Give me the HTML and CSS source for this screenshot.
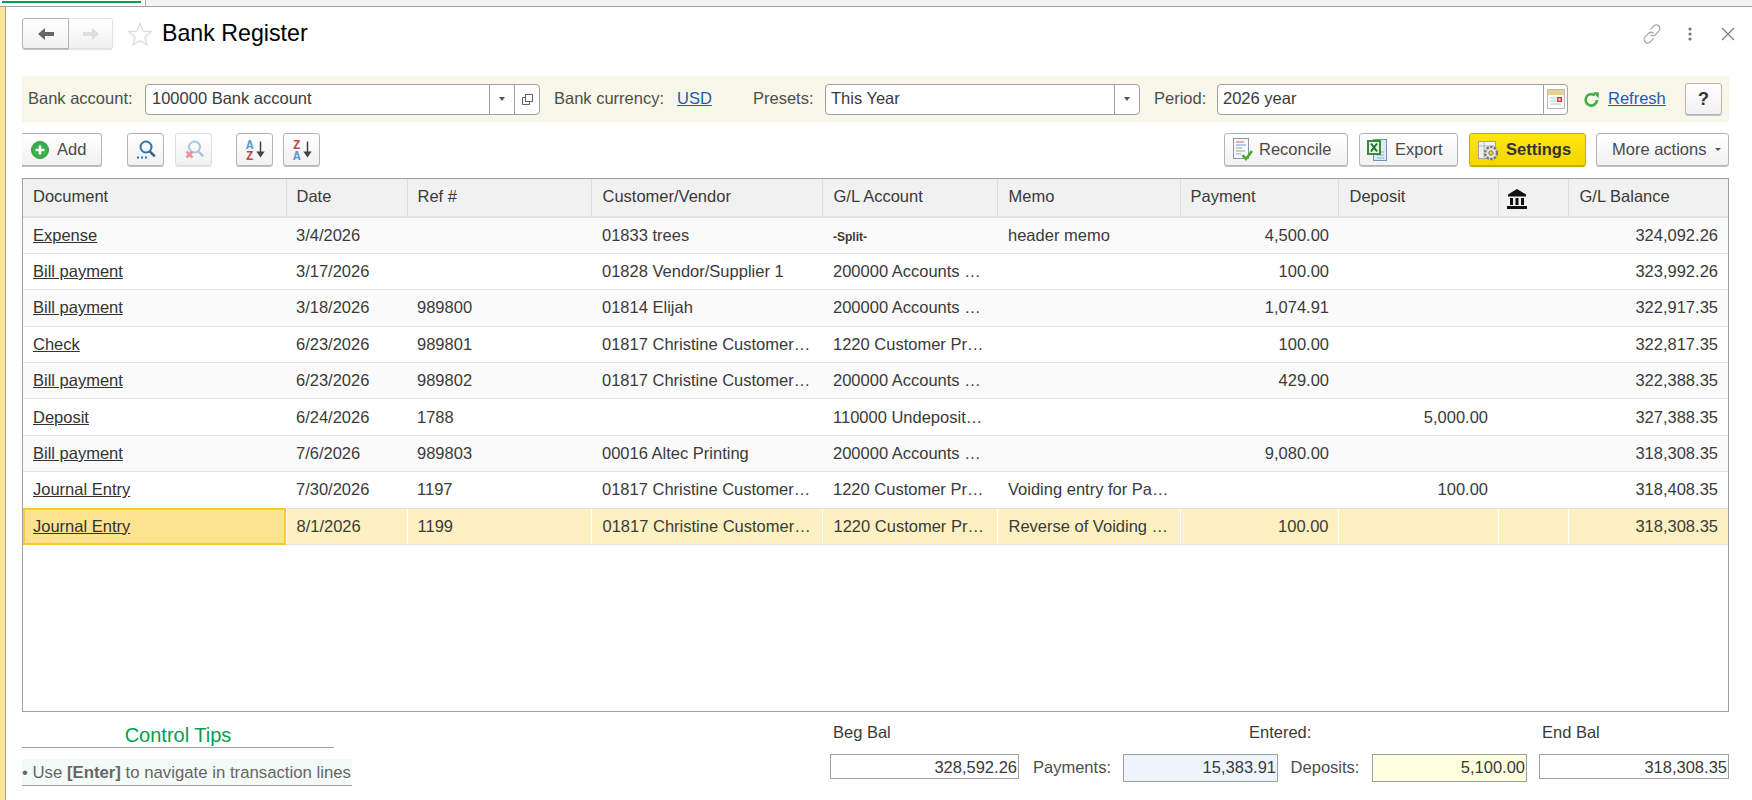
FILE: index.html
```html
<!DOCTYPE html>
<html lang="en">
<head>
    <meta charset="UTF-8">
    <title>Bank Register</title>
    <link rel="stylesheet" href="styles.css">
</head>
<body>
    <div class="tabstrip"><div class="tab"></div></div>

    <div class="main">
        <div class="edge"></div>
        <div class="window">

            <div class="titlebar">
                <div class="nav">
                    <button class="nav-btn back">
                        <svg width="18" height="14" viewBox="0 0 18 14"><path d="M8 1v4h9v4H8v4L1 7z" fill="#666"/></svg>
                    </button>
                    <button class="nav-btn forward">
                        <svg width="18" height="14" viewBox="0 0 18 14"><path d="M10 1v4H1v4h9v4l7-6z" fill="#dedede"/></svg>
                    </button>
                </div>
                <svg class="star" width="24" height="24" viewBox="0 0 24 24"><path d="M12 1.5l3 7.6 8 .6-6.1 5.2 1.9 8-6.800-4.300-6.800 4.300 1.900-8L1 9.700l8-.6z" fill="#fff" stroke="#dcdcdc" stroke-width="1.300"/></svg>
                <h1>Bank Register</h1>
                <div class="window-icons">
                    <svg width="22" height="22" viewBox="0 0 20 20" fill="none" stroke="#a8a8a8" stroke-width="1.200"><path d="M8.500 6l3-3.200a3.200 3.200 0 0 1 4.700 4.600l-3.200 3.200a3.200 3.200 0 0 1-4.400 0"/><path d="M11.500 14l-3 3.200a3.200 3.200 0 0 1-4.700-4.600L7 9.400a3.200 3.200 0 0 1 4.400 0"/></svg>
                    <svg class="kebab" width="4" height="14" viewBox="0 0 4 14"><circle cx="2" cy="2" r="1.600" fill="#777"/><circle cx="2" cy="7" r="1.600" fill="#777"/><circle cx="2" cy="12" r="1.600" fill="#777"/></svg>
                    <svg class="close" width="14" height="14" viewBox="0 0 14 14"><path d="M1 1l12 12M13 1L1 13" stroke="#808080" stroke-width="1.200"/></svg>
                </div>
            </div>

            <div class="filters">
                <span class="lbl w-account">Bank account:</span>
                <div class="field w-field1">
                    <span class="value">100000 Bank account</span>
                    <span class="field-btn drop"><i class="tri"></i></span>
                    <span class="field-btn open">
                        <svg width="13" height="13" viewBox="0 0 13 13" fill="none" stroke="#666"><rect x="4.500" y="1.500" width="7" height="7"/><path d="M4.500 4.500h-3v7h7v-3"/></svg>
                    </span>
                </div>
                <span class="lbl w-currency">Bank currency:</span>
                <a class="link w-usd" href="#">USD</a>
                <span class="lbl w-presets">Presets:</span>
                <div class="field w-field2">
                    <span class="value">This Year</span>
                    <span class="field-btn open"><i class="tri"></i></span>
                </div>
                <span class="lbl w-period">Period:</span>
                <div class="field w-field3">
                    <span class="value">2026 year</span>
                    <span class="field-btn cal">
                        <svg width="18" height="20" viewBox="0 0 18 20"><rect x=".5" y=".5" width="17" height="19" fill="#fbfbfb" stroke="#b9b9b9"/><rect x="1" y="1" width="16" height="5" fill="#e6d28e"/><path d="M3 9h6M3 12h6M3 15h11" stroke="#c4c4c4"/><rect x="10" y="8" width="5" height="5" fill="#e2343a"/><rect x="11.500" y="9.500" width="2" height="2" fill="#fff"/></svg>
                    </span>
                </div>
                <svg class="refresh" width="17" height="17" viewBox="0 0 17 17"><path d="M14 9a5.700 5.700 0 1 1-2.200-4.600" fill="none" stroke="#3fae49" stroke-width="2.600"/><path d="M10 1l6 .5-.5 6z" fill="#3fae49"/></svg>
                <a class="link w-refresh" href="#">Refresh</a>
                <button class="btn help">?</button>
            </div>

            <div class="toolbar">
                <button class="btn add">
                    <svg width="18" height="18" viewBox="0 0 18 18"><circle cx="9" cy="9" r="8.500" fill="#3cb04a" stroke="#2e9a3d"/><path d="M9 4.500v9M4.500 9h9" stroke="#fff" stroke-width="2.400"/></svg>
                    Add
                </button>
                <button class="btn square search">
                    <svg width="20" height="20" viewBox="0 0 20 20" fill="none"><circle cx="10" cy="7" r="5.500" stroke="#2f74ad" stroke-width="2"/><path d="M13.800 11.300l5 5" stroke="#2b5f8c" stroke-width="2.400"/><path d="M1 17.500h2M5 17.500h2M9 17.500h2" stroke="#2f74ad" stroke-width="2"/></svg>
                </button>
                <button class="btn square clear disabled">
                    <svg width="20" height="20" viewBox="0 0 20 20" fill="none"><circle cx="10.500" cy="7" r="5.500" stroke="#a9c6de" stroke-width="2"/><path d="M14.300 11.300l5 5" stroke="#a9c6de" stroke-width="2.400"/><path d="M2.500 11.500l6 6M8.500 11.500l-6 6" stroke="#e8929a" stroke-width="2.600"/></svg>
                </button>
                <button class="btn square sort">
                    <svg width="24" height="27" viewBox="0 0 24 27"><text x="3" y="12.500" class="az blue">A</text><text x="3" y="23.500" class="az red">Z</text><path d="M17.500 5.500v11" stroke="#444" stroke-width="1.500"/><path d="M13.300 15.500h8.400l-4.200 6z" fill="#444"/></svg>
                </button>
                <button class="btn square sort2">
                    <svg width="24" height="27" viewBox="0 0 24 27"><text x="3" y="12.500" class="az red">Z</text><text x="3" y="23.500" class="az blue">A</text><path d="M17.500 5.500v11" stroke="#444" stroke-width="1.500"/><path d="M13.300 15.500h8.400l-4.200 6z" fill="#444"/></svg>
                </button>
                <button class="btn reconcile">
                    <svg width="20" height="24" viewBox="0 0 20 24"><rect x=".5" y=".5" width="15" height="20" fill="#f5f7fa" stroke="#8c97a3"/><path d="M3 4h8" stroke="#d06a5a"/><path d="M3 7h10" stroke="#6fa3d6"/><path d="M3 10h6" stroke="#8fbf6a"/><path d="M3 13h9" stroke="#9aa3ad"/><path d="M3 16h5" stroke="#9aa3ad"/><path d="M9.500 17l3.500 4 6-8" fill="none" stroke="#4aa92f" stroke-width="2.600"/></svg>
                    Reconcile
                </button>
                <button class="btn export">
                    <svg width="21" height="24" viewBox="0 0 21 24"><rect x="6.500" y="1.500" width="13" height="21" fill="#dfe9f5" stroke="#6f8fb8"/><path d="M10 14h7M10 17h7M10 20h7" stroke="#8fb0d4"/><rect x="0" y="2" width="14" height="15" fill="#2f8f3f"/><rect x="2" y="4" width="10" height="11" fill="#e9f3e6"/><path d="M4 5.500l6 8M10 5.500l-6 8" stroke="#1f6f2e" stroke-width="2"/></svg>
                    Export
                </button>
                <button class="btn settings">
                    <svg width="21" height="22" viewBox="0 0 21 22"><rect x=".5" y="2.500" width="17" height="17" fill="#eef0f2" stroke="#a0a4a8"/><path d="M.5 7h17M6 2.500v17" stroke="#b4b8bc"/><circle cx="13" cy="14" r="6" fill="#e4e6e8" stroke="#77797c" stroke-width="2.400" stroke-dasharray="2.500 1.300"/><circle cx="13" cy="14" r="2.200" fill="#f5d800" stroke="#77797c"/></svg>
                    Settings
                </button>
                <button class="btn more">More actions <i class="tri small"></i></button>
            </div>

            <div class="grid-wrap">
                <table class="grid">
                    <colgroup>
                        <col class="c-doc"><col class="c-date"><col class="c-ref"><col class="c-cust"><col class="c-gl">
                        <col class="c-memo"><col class="c-pay"><col class="c-dep"><col class="c-bank"><col class="c-bal">
                    </colgroup>
                    <thead>
                        <tr>
                            <th>Document</th><th>Date</th><th>Ref #</th><th>Customer/Vendor</th><th>G/L Account</th>
                            <th>Memo</th><th>Payment</th><th>Deposit</th>
                            <th class="bank-col">
                                <svg width="20" height="21" viewBox="0 0 20 21"><path d="M10 1L1 6.500v2h18v-2z" fill="#111"/><path d="M3 10h3v7H3zM8.500 10h3v7h-3zM14 10h3v7h-3z" fill="#111"/><rect x="0" y="18" width="20" height="3" fill="#111"/></svg>
                            </th>
                            <th>G/L Balance</th>
                        </tr>
                    </thead>
                    <tbody>
                        <tr><td><a href="#">Expense</a></td><td>3/4/2026</td><td></td><td>01833 trees</td><td><span class="split">-Split-</span></td><td>header memo</td><td class="num">4,500.00</td><td class="num"></td><td></td><td class="num">324,092.26</td></tr>
                        <tr><td><a href="#">Bill payment</a></td><td>3/17/2026</td><td></td><td>01828 Vendor/Supplier 1</td><td>200000 Accounts …</td><td></td><td class="num">100.00</td><td class="num"></td><td></td><td class="num">323,992.26</td></tr>
                        <tr><td><a href="#">Bill payment</a></td><td>3/18/2026</td><td>989800</td><td>01814 Elijah</td><td>200000 Accounts …</td><td></td><td class="num">1,074.91</td><td class="num"></td><td></td><td class="num">322,917.35</td></tr>
                        <tr><td><a href="#">Check</a></td><td>6/23/2026</td><td>989801</td><td>01817 Christine Customer…</td><td>1220 Customer Pr…</td><td></td><td class="num">100.00</td><td class="num"></td><td></td><td class="num">322,817.35</td></tr>
                        <tr><td><a href="#">Bill payment</a></td><td>6/23/2026</td><td>989802</td><td>01817 Christine Customer…</td><td>200000 Accounts …</td><td></td><td class="num">429.00</td><td class="num"></td><td></td><td class="num">322,388.35</td></tr>
                        <tr><td><a href="#">Deposit</a></td><td>6/24/2026</td><td>1788</td><td></td><td>110000 Undeposit…</td><td></td><td class="num"></td><td class="num">5,000.00</td><td></td><td class="num">327,388.35</td></tr>
                        <tr><td><a href="#">Bill payment</a></td><td>7/6/2026</td><td>989803</td><td>00016 Altec Printing</td><td>200000 Accounts …</td><td></td><td class="num">9,080.00</td><td class="num"></td><td></td><td class="num">318,308.35</td></tr>
                        <tr><td><a href="#">Journal Entry</a></td><td>7/30/2026</td><td>1197</td><td>01817 Christine Customer…</td><td>1220 Customer Pr…</td><td>Voiding entry for Pa…</td><td class="num"></td><td class="num">100.00</td><td></td><td class="num">318,408.35</td></tr>
                        <tr class="selected"><td class="current"><a href="#">Journal Entry</a></td><td>8/1/2026</td><td>1199</td><td>01817 Christine Customer…</td><td>1220 Customer Pr…</td><td>Reverse of Voiding …</td><td class="num">100.00</td><td class="num"></td><td></td><td class="num">318,308.35</td></tr>
                    </tbody>
                </table>
            </div>

            <div class="footer">
                <div class="tips">
                    <div class="tips-title">Control Tips</div>
                    <div class="tip">• Use <b>[Enter]</b> to navigate in transaction lines</div>
                </div>
                <div class="totals">
                    <span class="total-head beg">Beg Bal</span>
                    <span class="total-head entered">Entered:</span>
                    <span class="total-head end">End Bal</span>
                    <div class="amount">328,592.26</div>
                    <span class="total-lbl pay-lbl">Payments:</span>
                    <div class="amount tall payments">15,383.91</div>
                    <span class="total-lbl">Deposits:</span>
                    <div class="amount tall deposits">5,100.00</div>
                    <div class="amount last">318,308.35</div>
                </div>
            </div>

        </div>
    </div>
</body>
</html>
```

FILE: styles.css
```css
* { box-sizing: border-box; }
html, body { margin: 0; height: 800px; overflow: hidden; }
body { font-family: "Liberation Sans", Arial, sans-serif; font-size: 16.5px; color: #3a3a3a; background: #fff; }

.tabstrip { height: 7px; background: #f2f2f2; border-bottom: 1px solid #a0a0a0; }
.tab { width: 146px; height: 6px; background: #fff; border-right: 1px solid #b0b0b0; padding: 0; position: relative; }
.tab::before { content: ""; display: block; height: 2px; width: 139px; margin-left: 2px; background: #00a050; position: relative; top: 1px; }

.main { display: flex; height: 793px; }
.edge { width: 6px; background: #fbe698; border-right: 1px solid #a8a390; }
.window { flex: 1; display: flex; flex-direction: column; padding: 11px 23px 0 16px; min-width: 0; }

/* title row */
.titlebar { display: flex; align-items: center; height: 31px; }
.nav { display: flex; height: 31px; }
.nav-btn { height: 31px; padding: 0; display: flex; align-items: center; justify-content: center; background: linear-gradient(#fff, #f1f1f1); }
.nav-btn.back { width: 47px; border: 1px solid #b4b4b4; border-radius: 3px 0 0 3px; box-shadow: 0 1px 0 #c4c4c4; }
.nav-btn.forward { width: 44px; border: 1px solid #e2e2e2; border-left: 0; border-radius: 0 3px 3px 0; box-shadow: 0 1px 0 #e6e6e6; }
.star { margin-left: 15px; }
h1 { margin: 0 0 0 10px; font-size: 23.2px; font-weight: normal; color: #000; }
.window-icons { margin-left: auto; margin-right: -6px; display: flex; align-items: center; }
.kebab { margin-left: 25px; }
.close { margin-left: 29px; }

/* filter bar */
.filters { display: flex; align-items: center; height: 46px; margin-top: 27px; padding-left: 6px; background: #f9f7ea; }
.lbl, .link { margin-bottom: 2px; }
.lbl { color: #4d4d4d; }
.link { color: #1a5bb8; }
.w-account { width: 117px; }
.w-field1 { width: 395px; }
.w-currency { width: 123px; margin-left: 14px; }
.w-usd { width: 76px; }
.w-presets { width: 72px; }
.w-field2 { width: 315px; }
.w-period { width: 63px; margin-left: 14px; }
.w-field3 { width: 351px; }
.refresh { margin-left: 15px; }
.w-refresh { width: 77px; margin-left: 8px; }

.field { display: flex; align-items: stretch; height: 31px; background: #fff; border: 1px solid #a0a0a0; border-radius: 4px; }
.value { flex: 1; padding-left: 5px; line-height: 27px; color: #3a3a3a; }
.w-field1 .value { padding-left: 6px; }
.field-btn { display: flex; align-items: center; justify-content: center; border-left: 1px solid #a0a0a0; }
.field-btn.drop { width: 25px; }
.field-btn.open { width: 25px; }
.field-btn.cal { width: 24px; }
.tri { display: block; width: 0; height: 0; border: 3.5px solid transparent; border-top: 4px solid #555; border-bottom: 0; }
.tri.small { display: inline-block; vertical-align: middle; margin-left: 4px; border-width: 3px; border-bottom: 0; }

/* buttons */
.btn { display: flex; align-items: center; height: 33px; padding: 0; font: inherit; color: #4a4a4a; background: linear-gradient(#fff, #f1f1f1); border: 1px solid #b4b4b4; border-radius: 3px; box-shadow: 0 1px 0 #c0c0c0; }
.btn.help { width: 37px; height: 32px; margin-left: 0; justify-content: center; font-size: 18px; font-weight: bold; color: #333; }
.btn.disabled { border-color: #dedede; box-shadow: 0 1px 0 #e4e4e4; }
.square { width: 37px; justify-content: center; }

.toolbar { display: flex; align-items: flex-start; height: 33px; margin-top: 11px; }
.add { width: 80px; padding-left: 9px; gap: 8px; border-left: 0; border-radius: 0 3px 3px 0; }
.search { margin-left: 25px; }
.clear { margin-left: 11px; }
.sort { margin-left: 24px; }
.sort2 { margin-left: 10px; }
.az { font-family: "Liberation Mono", monospace; font-size: 12.5px; font-weight: bold; }
.blue { fill: #5a9bd4; }
.red { fill: #c4454f; }
.reconcile { margin-left: auto; width: 124px; padding-left: 8px; gap: 6px; }
.export { margin-left: 11px; width: 99px; padding-left: 7px; gap: 7px; }
.settings { margin-left: 11px; width: 117px; padding-left: 8px; gap: 7px; font-weight: bold; color: #333; background: linear-gradient(#ffe60f, #f5d600); border-color: #c9ab00; box-shadow: 0 1px 0 #c4a800; }
.more { margin-left: 10px; width: 133px; padding-left: 15px; justify-content: flex-start; white-space: pre; }

/* grid */
.grid-wrap { flex: 1; margin-top: 12px; border: 1px solid #a0a0a0; min-height: 0; overflow: hidden; }
.grid { width: 1705px; table-layout: fixed; border-collapse: collapse; }
.c-doc { width: 263px; }
.c-date { width: 121px; }
.c-ref { width: 184px; }
.c-cust { width: 231px; }
.c-gl { width: 175px; }
.c-memo { width: 183px; }
.c-pay { width: 158px; }
.c-dep { width: 160px; }
.c-bank { width: 70px; }
.c-bal { width: 160px; }

.grid th { height: 38px; padding: 0 10px 2px; font-weight: normal; text-align: left; color: #3a3a3a; background: #f1f1f1; border-right: 1px solid #dcdcdc; border-bottom: 2px solid #e2e2e2; }
.grid th:last-child { border-right: 0; }
.grid .bank-col { padding: 2px 0 0 8px; }
.bank-col svg { display: block; }
.grid td { height: 36.4px; padding: 0 10px; white-space: nowrap; overflow: hidden; color: #3a3a3a; border-bottom: 1px solid #e2e2e2; }
.grid th:nth-child(n+4):nth-child(-n+6), .grid td:nth-child(n+4):nth-child(-n+6),
.grid th:nth-child(8), .grid th:nth-child(10) { padding-left: 11px; }
.grid td:nth-child(7) { padding-right: 9px; }
.grid tbody tr:nth-child(odd) { background: #fafafa; }
.grid a { color: #333; }
.num { text-align: right; }
.split { font-size: 12px; font-weight: bold; }
.grid .selected { background: #fdf1c2 !important; }
.selected td { border-right: 1px solid #fff; }
.selected td:last-child { border-right: 0; }
.grid .current { background: #fde28f; outline: 2px solid #fbc92c; outline-offset: -2px; }

/* bottom */
.footer { display: flex; height: 88px; padding-top: 10px; }
.tips { width: 330px; }
.tips-title { width: 312px; height: 26px; line-height: 26px; font-size: 20px; text-align: center; color: #00a050; border-bottom: 1px solid #a0a0a0; }
.tip { margin-top: 11px; height: 27px; line-height: 27px; font-size: 16.75px; white-space: nowrap; color: #666; background: #f4faf6; border-bottom: 1px solid #a0a0a0; }

.totals { margin-left: auto; display: grid; grid-template-columns: 189px 104px 155px 94px 155px 12px 190px; grid-template-rows: 24px auto; row-gap: 8px; align-items: start; }
.total-head { align-self: center; margin-bottom: 4px; color: #3a3a3a; }
.beg { grid-column: 1; padding-left: 3px; }
.entered { grid-column: 3 / 5; padding-left: 126px; }
.end { grid-column: 7; padding-left: 3px; }
.amount { height: 25px; line-height: 25px; padding-right: 1px; text-align: right; background: #fff; border: 1px solid #a0a0a0; }
.amount.tall { height: 28px; line-height: 25px; }
.payments { background: #eef5fd; }
.deposits { background: #ffffe0; }
.last { grid-column: 7; }
.total-lbl { text-align: center; line-height: 26px; color: #4d4d4d; }
.pay-lbl { padding-left: 2px; }
```
